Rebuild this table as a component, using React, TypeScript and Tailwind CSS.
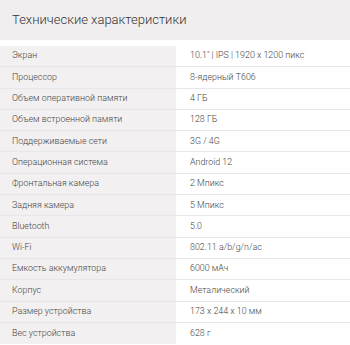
import React from "react";

const rows: [string, string][] = [
  ["Экран", "10.1\" | IPS | 1920 x 1200 пикс"],
  ["Процессор", "8-ядерный T606"],
  ["Объем оперативной памяти", "4 ГБ"],
  ["Объем встроенной памяти", "128 ГБ"],
  ["Поддерживаемые сети", "3G / 4G"],
  ["Операционная система", "Android 12"],
  ["Фронтальная камера", "2 Мпикс"],
  ["Задняя камера", "5 Мпикс"],
  ["Bluetooth", "5.0"],
  ["Wi-Fi", "802.11 a/b/g/n/ac"],
  ["Емкость аккумулятора", "6000 мАч"],
  ["Корпус", "Металический"],
  ["Размер устройства", "173 x 244 x 10 мм"],
  ["Вес устройства", "628 г"],
];

export default function App() {
  return (
    <div className="w-[350px] h-[345px] bg-white overflow-hidden" style={{ fontFamily: "Roboto, sans-serif" }}>
      <div className="h-[40px] bg-[#f0eeee] flex items-center pl-3 text-[13px] font-light text-[#333]">
        Технические характеристики
      </div>
      <div className="mt-[6px] flex flex-col">
        {rows.map(([k, v], i) => (
          <div key={i} className={`flex h-[21.3px] items-center text-[8.9px] font-light text-[#444] ${i < rows.length - 1 ? "border-b border-[#e8e6e6]" : ""}`}>
            <div className="w-[176px] h-full bg-[#f2f0f0] pl-3 flex items-center">{k}</div>
            <div className="pl-[14px] flex items-center">{v}</div>
          </div>
        ))}
      </div>
    </div>
  );
}
